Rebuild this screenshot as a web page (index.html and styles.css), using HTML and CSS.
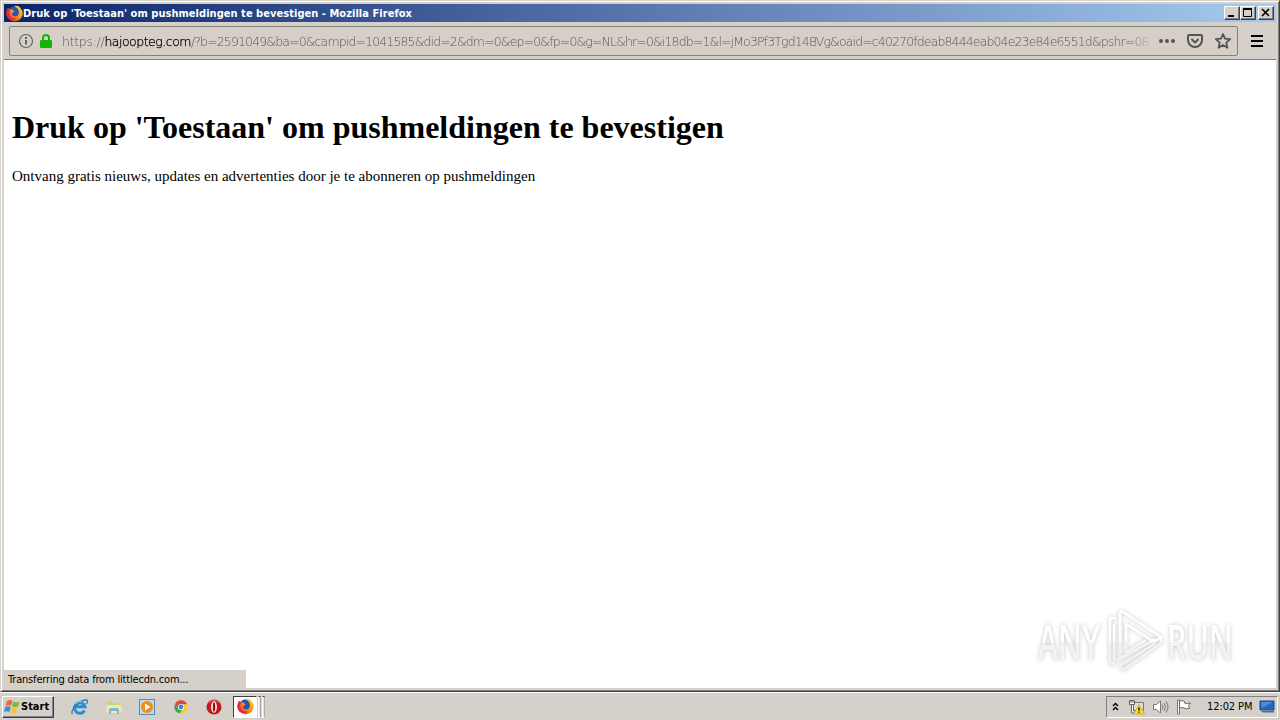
FILE: index.html
```html
<!DOCTYPE html>
<html lang="nl">
<head>
  <meta charset="UTF-8">
  <title>Druk op 'Toestaan' om pushmeldingen te bevestigen</title>
  <link rel="stylesheet" href="styles.css">
</head>
<body>

<!-- shared icon, used in the title bar and the taskbar -->
<svg class="defs" width="0" height="0">
  <defs>
    <linearGradient id="fox" x1="1" y1="0" x2="0" y2="1">
      <stop offset="0" stop-color="#ffe226"/>
      <stop offset=".45" stop-color="#ff9318"/>
      <stop offset="1" stop-color="#e8203c"/>
    </linearGradient>
    <linearGradient id="mark" gradientUnits="userSpaceOnUse" x1="0" y1="0" x2="0" y2="68">
      <stop offset="0" stop-color="#ffffff"/>
      <stop offset=".5" stop-color="#ffffff"/>
      <stop offset=".52" stop-color="#f3f3f3"/>
      <stop offset="1" stop-color="#f1f1f1"/>
    </linearGradient>
    <symbol id="firefox" viewBox="0 0 16 16">
      <circle cx="8.4" cy="7.6" r="6.4" fill="#2454b4"/>
      <path d="M8 1.2C9.500.3 12 .7 13.600 3 15.500 5 16 7.300 15.700 9A7.700 7.300 0 0 1 .4 8.500C.3 6 1 4 2 2.500L3 4.200C4.500 3.700 6 4 6.700 4.600L8 6 6.400 7.300 5.600 8.400C6 10.500 9 11.400 11 9.800 12.800 8 12.400 4.500 10.500 3Z" fill="url(#fox)"/>
      <path d="M.4 8.500C.3 6 1 4 2 2.500L3 4.200 4.300 4 3 7C3 11 6.500 13.500 10 12.600 7 15.500 1 14 .4 8.500Z" fill="#e7263a"/>
    </symbol>
  </defs>
</svg>

<div class="window">
  <div class="titlebar">
    <svg class="app-icon" width="17" height="17"><use href="#firefox"/></svg>
    <span class="title">Druk op 'Toestaan' om pushmeldingen te bevestigen - Mozilla Firefox</span>
    <div class="controls">
      <button class="control"><svg width="12" height="10"><path d="M2 8h6" stroke="#000" stroke-width="2"/></svg></button>
      <button class="control"><svg width="12" height="10"><path d="M1.500 1v7.500h8V1M1 1h9" fill="none" stroke="#000"/><path d="M1 1h9" stroke="#000" stroke-width="2"/></svg></button>
      <button class="control close"><svg width="12" height="10"><path d="M2 1l7 7M9 1l-7 7" stroke="#000" stroke-width="1.700"/></svg></button>
    </div>
  </div>

  <div class="navbar">
    <div class="urlbar">
      <svg class="info" width="16" height="16" viewBox="0 0 16 16"><circle cx="8" cy="8" r="6.500" fill="none" stroke="#666" stroke-width="1.200"/><path d="M8 7v4.500M8 4v2" stroke="#555" stroke-width="1.700"/></svg>
      <svg class="lock" width="14" height="16" viewBox="0 0 14 16"><path d="M4 8V5a3 3 0 0 1 6 0v3" fill="none" stroke="#12b60b" stroke-width="2"/><rect x="1" y="7" width="12" height="8" rx="1" fill="#12b60b"/></svg>
      <div class="url"><span class="scheme">https://</span><span class="host">hajoopteg.com</span><span class="query">/?b=2591049&amp;ba=0&amp;campid=1041585&amp;did=2&amp;dm=0&amp;ep=0&amp;fp=0&amp;g=NL&amp;hr=0&amp;i18db=1&amp;l=jMo3Pf3Tgd14BVg&amp;oaid=c40270fdeab8444eab04e23e84e6551d&amp;pshr=08</span></div>
      <div class="actions">
        <svg width="18" height="18" viewBox="0 0 18 18" fill="#555"><circle cx="3" cy="9" r="2"/><circle cx="9" cy="9" r="2"/><circle cx="15" cy="9" r="2"/></svg>
        <svg width="18" height="18" viewBox="0 0 18 18" fill="none" stroke="#555" stroke-width="2" stroke-linejoin="round" stroke-linecap="round"><path d="M3 3h12q1 0 1 1v4a7 7 0 0 1-14 0V4q0-1 1-1z"/><path d="M6 7.500l3 3 3-3"/></svg>
        <svg width="18" height="18" viewBox="0 0 18 18" fill="none" stroke="#555" stroke-width="1.800" stroke-linejoin="round"><path d="M9 2l2 4.700 5.200.5-3.900 3.500 1.100 5.100L9 13.100l-4.400 2.700 1.100-5.100L1.800 7.200 7 6.700z"/></svg>
      </div>
    </div>
    <svg class="menu" width="12" height="12"><path d="M0 1h12M0 6h12M0 11h12" stroke="#000" stroke-width="2"/></svg>
  </div>

  <div class="page">
    <h1>Druk op 'Toestaan' om pushmeldingen te bevestigen</h1>
    <p>Ontvang gratis nieuws, updates en advertenties door je te abonneren op pushmeldingen</p>
    <div class="status"><span>Transferring data from littlecdn.com...</span></div>

    <div class="watermark">
      <span class="word any">ANY</span>
      <svg width="62" height="68" viewBox="0 0 62 68" fill="none" stroke="url(#mark)" stroke-width="2.600" stroke-linejoin="round" stroke-linecap="round">
        <path d="M10 11H7q-2 0-2 2v42l4 3V18"/>
        <path d="M21 41V17l28 18 7-5L18 5q-3-2-3 1v44"/>
        <path d="M12 53l37-20M56 30v6L18 63l-3-4 34-22M21 45l19-11"/>
      </svg>
      <span class="word run">RUN</span>
    </div>
  </div>
</div>

<div class="taskbar">
  <button class="start">
    <svg width="17" height="16" viewBox="0 0 17 16"><path d="M3 2q3-2 5.500 0L7 7Q4.500 5.500 1.500 7z" fill="#ed6b35"/><path d="M9.500 2.500q3 1.500 6 0L14 7.500q-3 1.500-6 0z" fill="#79b943"/><path d="M1.200 8q3-1.500 5.500 0L5.300 13Q3 11.500 0 13z" fill="#3c8bd3"/><path d="M7.700 8.500q3 1.500 6 0l-1.500 5q-3 1.500-6 0z" fill="#f9c331"/></svg>
    <span>Start</span>
  </button>
  <div class="quick">
    <svg width="18" height="18" viewBox="0 0 18 18"><path d="M13.500 12.500A5.300 5.300 0 1 1 14 8.800H5" fill="none" stroke="#2491d8" stroke-width="3"/><path d="M1.500 16C-1 13 7 3 14 2c3-.4 3 1.500 1.500 4" fill="none" stroke="#3677b4" stroke-width="1.300"/><path d="M4 6q3-3 7-2" fill="none" stroke="#8bd3f5"/></svg>
    <svg width="18" height="18" viewBox="0 0 18 18"><path d="M2 3h5l1 2h8v10H2z" fill="#e8c968"/><path d="M3 5h12v3H3z" fill="#b6dc8c"/><path d="M1.500 7h15v8h-15z" fill="#f8e79d"/><path d="M4 16v-4q0-2 2-2h6q2 0 2 2v4h-2v-3H6v3z" fill="#72b9de"/></svg>
    <svg width="18" height="18" viewBox="0 0 18 18"><rect x="1.500" y="1.500" width="15" height="15" fill="#b9dcf2" stroke="#538fc5"/><circle cx="9" cy="9" r="6" fill="#f58a16"/><path d="M7 5.500v7L12.500 9z" fill="#fff"/></svg>
    <svg width="18" height="18" viewBox="0 0 18 18"><circle cx="9" cy="9" r="6.500" fill="#f7cb34"/><path d="M3 6.300A6.500 6.500 0 0 1 15 6.300H9L6 10z" fill="#df473c"/><path d="M3 6.300l4 5 3 .5-2.500 3.600A6.500 6.500 0 0 1 3 6.300z" fill="#35a45a"/><circle cx="9" cy="9" r="3.100" fill="#fff"/><circle cx="9" cy="9" r="2.400" fill="#3b83d7"/></svg>
    <svg width="18" height="18" viewBox="0 0 18 18"><circle cx="9" cy="9" r="7.500" fill="#c5171d"/><path d="M4 5q5-5 10 0" fill="none" stroke="#ed7778"/><ellipse cx="9" cy="9" rx="2.900" ry="5.800" fill="#fff"/><ellipse cx="9" cy="9" rx="1.300" ry="4.800" fill="#981016"/></svg>
  </div>
  <div class="task"><svg width="17" height="17"><use href="#firefox"/></svg></div>
  <div class="stack"></div>
  <div class="stack"></div>
  <div class="tray">
    <svg class="chevrons" width="7" height="9" viewBox="0 0 7 9"><path d="M1 4l2.500-2.500L6 4M1 8l2.500-2.500L6 8" fill="none" stroke="#000" stroke-width="1.400"/></svg>
    <svg class="network" width="17" height="16" viewBox="0 0 17 16"><path d="M5.500 3.500h10v8h-10z" fill="#ddd" stroke="#777"/><path d="M1.500 1.500h5v4h-5z" fill="#fff" stroke="#666"/><path d="M3 1v3M5 1v3" stroke="#666"/><path d="M3.500 5.500h2V12H8v2H3.500z" fill="#fff" stroke="#666"/><path d="M11 5.500L16.500 15h-11z" fill="#ffdd20" stroke="#b99b16" stroke-width=".7"/><path d="M11 8.500v3M11 12.500v1.300" stroke="#000" stroke-width="1.300"/></svg>
    <svg class="volume" width="17" height="16" viewBox="0 0 17 16"><path d="M1.500 5.500h3L8.500 2v12l-4-3.500h-3z" fill="#fff" stroke="#777"/><path d="M10 5.500q2 2.500 0 5M12 4q3 4 0 8M14 2.500q4 5.500 0 11" fill="none" stroke="#777"/></svg>
    <svg class="flag" width="17" height="16" viewBox="0 0 17 16"><path d="M1.500 1h2v14h-2z" fill="#fff" stroke="#777"/><path d="M3.500 2q3-1 5 .5V4q3 1 6 0l-2 2.500 1 3q-3 1-5.500-.5-2-1-4.500 0z" fill="#fff" stroke="#666"/></svg>
    <span class="clock">12:02 PM</span>
    <svg class="desktop" width="16" height="15" viewBox="0 0 16 15"><path d="M1 2h14v9H1z" fill="#2368bd" stroke="#174989"/><path d="M2 3h12L3 9z" fill="#4a8cd8"/><path d="M2 12h13v1.500H4z" fill="#446b91"/></svg>
  </div>
</div>

</body>
</html>
```
FILE: styles.css
```css
* {
  box-sizing: border-box;
}

body {
  display: flex;
  flex-direction: column;
  width: 1280px;
  height: 720px;
  margin: 0;
  overflow: hidden;
  background: #d5d0c9;
  color: #000;
  font-family: "DejaVu Sans Condensed", "DejaVu Sans", sans-serif;
  font-size: 11px;
}

svg {
  display: block;
  flex: none;
}

.defs {
  position: absolute;
}

button {
  padding: 0;
  font: inherit;
  color: #000;
  background: #d5d0c9;
  border: 1px solid;
  border-color: #fff #404040 #404040 #fff;
  box-shadow: inset -1px -1px #808080;
}

/* window */
.window {
  display: flex;
  flex-direction: column;
  height: 692px;
  padding: 3px;
  border: 1px solid;
  border-color: #d5d0c9 #404040 #404040 #d5d0c9;
  box-shadow: inset 1px 1px #fff, inset -1px -1px #808080;
}

.titlebar {
  display: flex;
  align-items: center;
  flex: none;
  height: 18px;
  padding-left: 2px;
  background: linear-gradient(to right, #0a246a, #a6caf0);
}

.title {
  color: #fff;
  font-weight: bold;
  letter-spacing: 0.04px;
  white-space: nowrap;
}

.controls {
  display: flex;
  margin-left: auto;
  padding-right: 2px;
}

.control {
  width: 16px;
  height: 14px;
  padding: 1px;
}

.close {
  margin-left: 2px;
}

.navbar {
  display: flex;
  align-items: center;
  flex: none;
  height: 38px;
  padding: 0 13px 0 5px;
  border-bottom: 1px solid #808080;
}

.urlbar {
  display: flex;
  align-items: center;
  width: 1229px;
  height: 30px;
  padding: 0 5px 0 8px;
  border: 1px solid #858179;
  border-radius: 2px;
  background: #d6cfc7;
}

.lock {
  margin-left: 5px;
}

.url {
  width: 1091px;
  margin-left: 9px;
  padding-top: 2px;
  overflow: hidden;
  color: #5c5853;
  font-family: "DejaVu Sans", sans-serif;
  font-size: 12.5px;
  font-weight: 200;
  line-height: 20px;
  white-space: nowrap;
  mask-image: linear-gradient(to right, #000 1066px, transparent 1093px);
}

.scheme {
  letter-spacing: -0.3px;
}

.host {
  color: #000;
  letter-spacing: -0.5px;
  -webkit-text-stroke: 0.25px #000;
}

.query {
  letter-spacing: -0.87px;
}

.actions {
  display: flex;
  gap: 10px;
  margin-left: auto;
}

.menu {
  margin-left: auto;
}

/* page */
.page {
  position: relative;
  flex: 1;
  padding: 48px 8px 0;
  background: #fff;
  font-family: "Liberation Serif", serif;
}

h1 {
  margin: 0;
  font-size: 32px;
  line-height: 38px;
  white-space: nowrap;
}

p {
  margin: 21px 0 0;
  font-size: 15px;
  line-height: 18px;
}

.status {
  position: absolute;
  left: 0;
  bottom: 0;
  width: 242px;
  height: 18px;
  padding-left: 4px;
  background: #d5d0c9;
  font-family: "DejaVu Sans Condensed", sans-serif;
  font-size: 11px;
  letter-spacing: -0.18px;
  line-height: 20px;
}

.watermark {
  position: absolute;
  left: 1034px;
  top: 547px;
  display: flex;
  align-items: center;
  filter: drop-shadow(0 0 2px rgba(0, 0, 0, 0.23));
}

.word {
  display: inline-block;
  width: 108px;
  margin-right: -41px;
  color: transparent;
  background: linear-gradient(#fff 51%, #f3f3f3 52%);
  background-clip: text;
  font-family: "Open Sans", sans-serif;
  font-size: 49px;
  font-weight: 600;
  line-height: 68px;
  transform: scaleX(0.62);
  transform-origin: left;
  white-space: nowrap;
}

/* taskbar */
.taskbar {
  display: flex;
  align-items: center;
  height: 28px;
  padding: 0 2px;
  border-top: 1px solid #fff;
}

.start {
  display: flex;
  align-items: center;
  width: 52px;
  height: 22px;
  padding-left: 1px;
  font-weight: bold;
}

.quick {
  display: flex;
  gap: 15.6px;
  margin-left: 17px;
}

.task {
  display: flex;
  align-items: center;
  width: 24px;
  height: 22px;
  margin-left: 10px;
  padding-left: 3px;
  background: #fff;
  border: 1px solid;
  border-color: #404040 #fff #fff #404040;
}

.stack {
  width: 3px;
  height: 22px;
  margin-left: 1px;
  background: #e4e1dc;
  border: 1px solid;
  border-color: #404040 #b0aca5 #fff #fff;
}

.tray {
  display: flex;
  align-items: center;
  width: 172px;
  height: 22px;
  margin-left: auto;
  padding-left: 5px;
  border: 1px solid;
  border-color: #808080 #fff #fff #808080;
}

.network {
  margin-left: 9px;
}

.volume {
  margin-left: 7px;
}

.flag {
  margin-left: 7px;
}

.clock {
  width: 48px;
  margin-left: 14px;
  letter-spacing: -0.1px;
  white-space: nowrap;
}

.desktop {
  margin-left: 4px;
}
```
